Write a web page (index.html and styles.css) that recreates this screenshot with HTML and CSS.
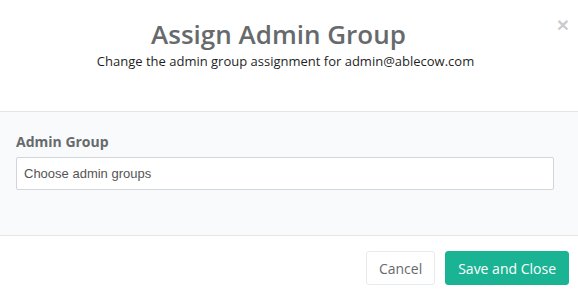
FILE: index.html
```html
<!DOCTYPE html>
<html lang="en">
<head>
    <meta charset="UTF-8">
    <meta name="viewport" content="width=device-width, initial-scale=1.0">
    <title>Assign Admin Group</title>
    <link rel="stylesheet" href="styles.css">
</head>
<body>
    <div class="modal-content">
        <div class="modal-header">
            <button class="close" type="button">&times;</button>
            <h4 class="modal-title">Assign Admin Group</h4>
            <p class="modal-subtitle">Change the admin group assignment for admin@ablecow.com</p>
        </div>

        <div class="modal-body">
            <label class="field-label">Admin Group</label>
            <input class="field-input" type="text" placeholder="Choose admin groups">
        </div>

        <div class="modal-footer">
            <button class="btn btn-white" type="button">Cancel</button>
            <button class="btn btn-primary" type="button">Save and Close</button>
        </div>
    </div>
</body>
</html>
```

FILE: styles.css
```css
* {
    margin: 0;
    padding: 0;
    box-sizing: border-box;
}

body {
    font-family: "Open Sans", "Liberation Sans", sans-serif;
    font-size: 13px;
    color: #676a6c;
    background: #fff;
}

.modal-content {
    display: flex;
    flex-direction: column;
    min-height: 295px;
}

/* 头部 */
.modal-header {
    position: relative;
    height: 112px;
    padding: 16px 7px 0 0;
    text-align: center;
    border-bottom: 1px solid #e5e5e5;
}

/* 右侧关闭按钮占位，标题略微左移 */
.modal-title {
    padding-right: 14px;
    font-size: 26px;
    font-weight: 600;
    line-height: 36px;
    color: #676a6c;
}

.modal-subtitle {
    font-size: 13px;
    line-height: 18px;
    color: #1f1f1f;
}

.close {
    position: absolute;
    top: 14px;
    right: 9px;
    border: none;
    background: transparent;
    font-family: "Liberation Sans", sans-serif;
    font-size: 21px;
    font-weight: bold;
    line-height: 21px;
    color: #000;
    opacity: 0.2;
    cursor: pointer;
}

/* 内容区 */
.modal-body {
    display: flex;
    flex-direction: column;
    height: 124px;
    padding: 20px 24px 0 16px;
    background: #f8fafb;
    border-bottom: 1px solid #e5e5e5;
}

.field-label {
    font-size: 14px;
    font-weight: 700;
    line-height: 20px;
    margin-bottom: 5px;
}

.field-input {
    height: 33px;
    padding: 6px 7px;
    border: 1px solid #d2d6dc;
    border-radius: 2px;
    background: #fff;
    font-family: "Liberation Sans", sans-serif;
    font-size: 13px;
    color: #555;
}

.field-input::placeholder {
    color: #555;
}

/* 底部 */
.modal-footer {
    display: flex;
    justify-content: flex-end;
    gap: 10px;
    padding: 15px 9px 15px 15px;
}

.btn {
    height: 34px;
    padding: 0 12px;
    border-radius: 3px;
    font-family: "Open Sans", sans-serif;
    font-size: 14px;
    cursor: pointer;
}

.btn-white {
    border: 1px solid #e7eaec;
    background: #fff;
    color: #676a6c;
}

.btn-primary {
    border: 1px solid #1ab394;
    background: #1ab394;
    color: #fff;
}
```
